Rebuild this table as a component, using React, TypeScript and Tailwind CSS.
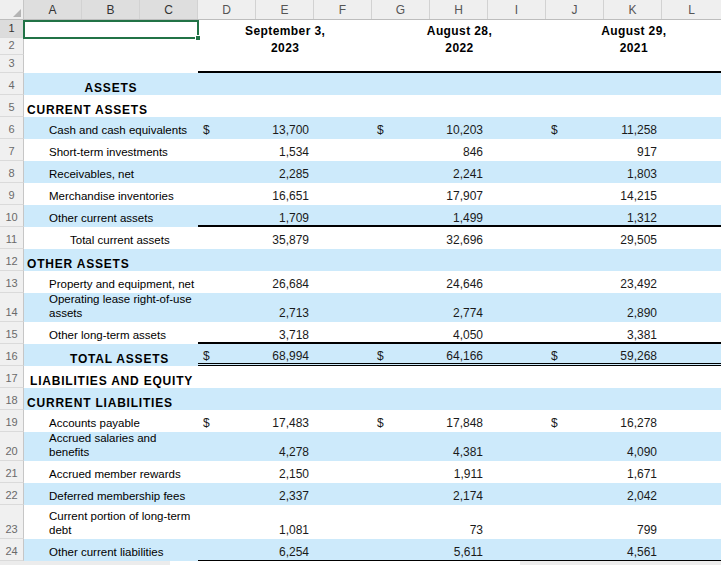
import type { ReactNode } from 'react'

type Line = 'thick' | 'double' | 'thin'

type Row = {
  n: number
  h: number
  label: ReactNode
  indent?: number
  bold?: boolean
  center?: boolean
  blue?: boolean
  dollar?: boolean
  vals?: [string, string, string]
  line?: Line
}

const rows: Row[] = [
  { n: 4, h: 22, label: 'ASSETS', bold: true, center: true, blue: true },
  { n: 5, h: 22, label: 'CURRENT ASSETS', bold: true, indent: 3 },
  { n: 6, h: 22, label: 'Cash and cash equivalents', indent: 25, blue: true, dollar: true, vals: ['13,700', '10,203', '11,258'] },
  { n: 7, h: 22, label: 'Short-term investments', indent: 25, vals: ['1,534', '846', '917'] },
  { n: 8, h: 22, label: 'Receivables, net', indent: 25, blue: true, vals: ['2,285', '2,241', '1,803'] },
  { n: 9, h: 22, label: 'Merchandise inventories', indent: 25, vals: ['16,651', '17,907', '14,215'] },
  { n: 10, h: 22, label: 'Other current assets', indent: 25, blue: true, vals: ['1,709', '1,499', '1,312'], line: 'thick' },
  { n: 11, h: 22, label: 'Total current assets', indent: 46, vals: ['35,879', '32,696', '29,505'] },
  { n: 12, h: 22, label: 'OTHER ASSETS', bold: true, indent: 3, blue: true },
  { n: 13, h: 22, label: 'Property and equipment, net', indent: 25, vals: ['26,684', '24,646', '23,492'] },
  {
    n: 14,
    h: 29,
    label: (
      <>
        Operating lease right-of-use
        <br />
        assets
      </>
    ),
    indent: 25,
    blue: true,
    vals: ['2,713', '2,774', '2,890'],
  },
  { n: 15, h: 22, label: 'Other long-term assets', indent: 25, vals: ['3,718', '4,050', '3,381'], line: 'thick' },
  { n: 16, h: 22, label: 'TOTAL ASSETS', bold: true, indent: 46, blue: true, dollar: true, vals: ['68,994', '64,166', '59,268'], line: 'double' },
  { n: 17, h: 22, label: 'LIABILITIES AND EQUITY', bold: true, indent: 6 },
  { n: 18, h: 22, label: 'CURRENT LIABILITIES', bold: true, indent: 3, blue: true },
  { n: 19, h: 22, label: 'Accounts payable', indent: 25, dollar: true, vals: ['17,483', '17,848', '16,278'] },
  {
    n: 20,
    h: 29,
    label: (
      <>
        Accrued salaries and
        <br />
        benefits
      </>
    ),
    indent: 25,
    blue: true,
    vals: ['4,278', '4,381', '4,090'],
  },
  { n: 21, h: 22, label: 'Accrued member rewards', indent: 25, vals: ['2,150', '1,911', '1,671'] },
  { n: 22, h: 22, label: 'Deferred membership fees', indent: 25, blue: true, vals: ['2,337', '2,174', '2,042'] },
  {
    n: 23,
    h: 34,
    label: (
      <>
        Current portion of long-term
        <br />
        debt
      </>
    ),
    indent: 25,
    vals: ['1,081', '73', '799'],
  },
  { n: 24, h: 22, label: 'Other current liabilities', indent: 25, blue: true, vals: ['6,254', '5,611', '4,561'], line: 'thin' },
]

const columns = ['A', 'B', 'C', 'D', 'E', 'F', 'G', 'H', 'I', 'J', 'K', 'L']

// borders sit in the cell, so trim the bottom padding by their width
const lineClass: Record<Line, string> = {
  thick: 'border-b-2 border-black pb-0',
  double: 'border-b-[3px] border-double border-black pb-0',
  thin: 'border-b border-black pb-[1px]',
}

function RowHead({ n, h, active }: { n: number; h: number; active?: boolean }) {
  return (
    <div
      style={{ height: h }}
      className={`w-[24px] shrink-0 flex items-end justify-center pb-[2px] text-[11px] leading-[13px] border-r border-b border-r-[#c6c6c6] border-b-[#dadada] ${
        active ? 'bg-[#dcdcdc] text-[#333]' : 'bg-[#f0f0f0] text-[#6a6a6a]'
      }`}
    >
      {n}
    </div>
  )
}

function DataRow({ row }: { row: Row }) {
  const pad = row.line ? lineClass[row.line] : 'pb-[2px]'
  return (
    <div style={{ height: row.h }} className={`flex ${row.blue ? 'bg-[#cdeafb]' : 'bg-white'}`}>
      <RowHead n={row.n} h={row.h} />
      <div
        style={{ paddingLeft: row.indent ?? 0 }}
        className={`w-[174px] shrink-0 flex items-end leading-[14px] text-black ${
          row.bold ? 'font-bold text-[12px] tracking-[0.8px] pb-0' : 'text-[11.5px] pb-[2px]'
        } ${row.center ? 'justify-center' : ''}`}
      >
        <span>{row.label}</span>
      </div>
      <div className={`flex-1 flex items-end text-[12px] leading-[14px] text-[#1a1a1a] ${pad}`}>
        {[0, 1, 2].map((i) => (
          <div key={i} className={`flex ${i === 2 ? 'flex-1' : 'w-[174px]'}`}>
            <div className="w-[58px] pl-[5px]">{row.dollar ? '$' : ''}</div>
            <div className="w-[58px] text-right pr-[5px]">{row.vals ? row.vals[i] : ''}</div>
            <div className="flex-1" />
          </div>
        ))}
      </div>
    </div>
  )
}

function DateHead({ top, bottom }: { top: string; bottom: string }) {
  return (
    <div className="flex-1 flex flex-col items-center pt-[3px] text-[12px] leading-[17px] font-bold tracking-[0.4px] text-black">
      <span>{top}</span>
      <span>{bottom}</span>
    </div>
  )
}

export default function App() {
  return (
    <div
      className="relative w-[721px] h-[565px] overflow-hidden bg-white select-none"
      style={{ fontFamily: '"Liberation Sans", Arial, sans-serif' }}
    >
      {/* column letters */}
      <div className="flex h-[20px] border-b border-[#bdbdbd] bg-[#efefef]">
        <div className="w-[24px] shrink-0 relative border-r border-[#c6c6c6]">
          <svg width="24" height="20" className="absolute inset-0">
            <polygon points="21,9 21,17 13,17" fill="#b4b4b4" />
          </svg>
        </div>
        {columns.map((c, i) => (
          <div
            key={c}
            className={`flex items-center justify-center text-[12px] ${
              i === 11 ? 'flex-1' : 'w-[58px] border-r border-[#d2d2d2]'
            } ${i < 3 ? 'bg-[#dedede] text-[#333]' : 'text-[#555]'}`}
          >
            {c}
          </div>
        ))}
      </div>

      {/* rows 1-3: period headings */}
      <div className="flex h-[53px]">
        <div className="flex flex-col">
          <RowHead n={1} h={18} active />
          <RowHead n={2} h={17} />
          <RowHead n={3} h={18} />
        </div>
        <div className="w-[174px] shrink-0" />
        <div className="flex-1 flex border-b-2 border-black">
          <DateHead top="September 3," bottom="2023" />
          <DateHead top="August 28," bottom="2022" />
          <DateHead top="August 29," bottom="2021" />
        </div>
      </div>

      {rows.map((r) => (
        <DataRow key={r.n} row={r} />
      ))}

      {/* scrollbar edge */}
      <div className="flex h-[4px]">
        <div className="w-[170px] bg-[#ececec]" />
        <div className="w-[350px] bg-white" />
        <div className="flex-1 bg-[#ececec]" />
      </div>

      {/* selected cell A1:C1 */}
      <div className="absolute left-[23px] top-[20px] w-[176px] h-[19px] border-2 border-[#217346]" />
      <div className="absolute left-[195px] top-[35px] w-[6px] h-[6px] bg-[#217346] border border-white" />
    </div>
  )
}
